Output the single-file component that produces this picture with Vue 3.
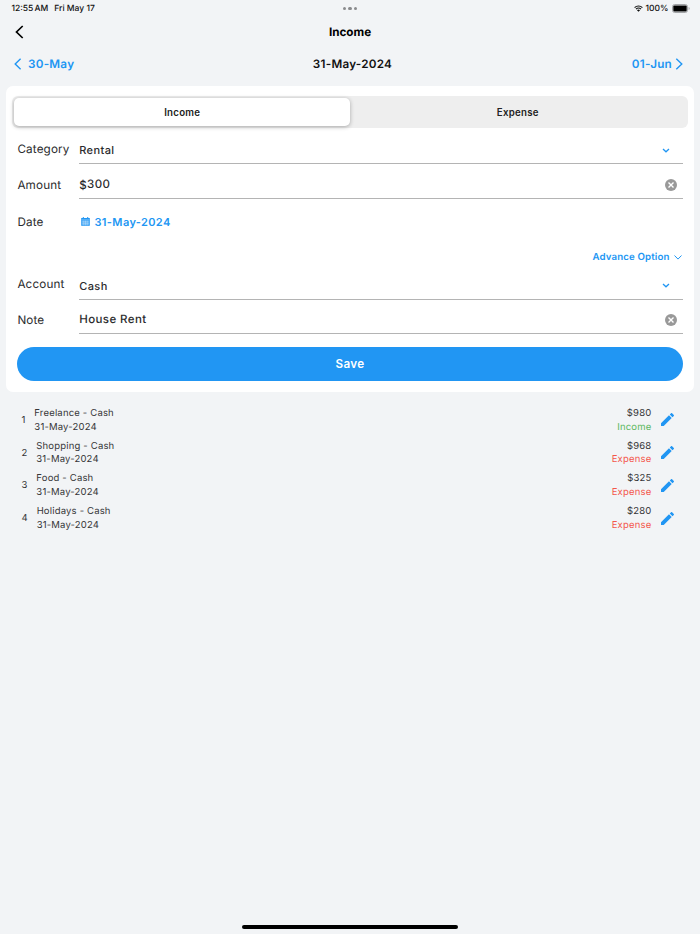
<template>
  <div class="screen">
    <!-- Status bar -->
    <div class="status-bar">
      <div class="status-left">
        <span class="clock">12:55 AM</span>
        <span class="today">Fri May 17</span>
      </div>
      <div class="dots"><i></i><i></i><i></i></div>
      <div class="status-right">
        <svg class="wifi" viewBox="0 0 18 14">
          <path d="M1.2 5.2a11 11 0 0 1 15.6 0M4 8.2a7 7 0 0 1 10 0" fill="none" stroke="#111" stroke-width="2.3" />
          <path d="M9 13.4 5.9 10.3a4.4 4.4 0 0 1 6.2 0z" fill="#111" />
        </svg>
        <span class="percent">100%</span>
        <svg class="battery" viewBox="0 0 18 9">
          <rect x=".5" y=".5" width="15" height="8" rx="2.2" fill="#f2f4f6" stroke="#a3a5a8" />
          <rect x="1.3" y="1.5" width="13.4" height="6" rx="1" fill="#000" />
          <path d="M16.6 3v3q1-.4 1-1.5t-1-1.5z" fill="#a3a5a8" />
        </svg>
      </div>
    </div>

    <!-- Title -->
    <header class="nav">
      <svg class="back" viewBox="0 0 9 14"><path d="M7.7 1 1.5 7l6.2 6" /></svg>
      <h1>Income</h1>
    </header>

    <!-- Day switcher -->
    <div class="days">
      <a class="prev">
        <svg viewBox="0 0 8 12"><path d="M6.6.8 1.2 6l5.4 5.2" /></svg>
        <span>30-May</span>
      </a>
      <strong>31-May-2024</strong>
      <a class="next">
        <span>01-Jun</span>
        <svg viewBox="0 0 8 12"><path d="m1.3.7 5.5 5.3-5.5 5.3" /></svg>
      </a>
    </div>

    <!-- Form -->
    <section class="card">
      <div class="tabs">
        <button
          v-for="tab in tabs"
          :key="tab"
          class="tab"
          :class="{ active: tab === type }"
          @click="type = tab"
        >{{ tab }}</button>
      </div>

      <div class="row select-row category">
        <label>Category</label>
        <div class="field">
          <span>Rental</span>
          <svg class="caret" viewBox="0 0 8 5"><path d="m1 1 3 2.8L7 1" /></svg>
        </div>
      </div>
      <div class="row input-row">
        <label>Amount</label>
        <div class="field">
          <span><b class="currency">$</b>300</span>
          <svg class="clear" viewBox="0 0 12 12"><circle cx="6" cy="6" r="6" /><path d="m3.5 3.5 5 5m0-5-5 5" /></svg>
        </div>
      </div>
      <div class="row date-row">
        <label>Date</label>
        <a class="date">
          <svg viewBox="0 0 9 9">
            <path d="M.9.9h.9V0h1v.9h3.4V0h1v.9h.9q.9 0 .9.9v.9H0v-.9Q0 .9.9.9z" />
            <path d="M0 3.1h9v5q0 .9-.9.9H.9Q0 9 0 8.1z" opacity=".78" />
            <path d="M.8 4.9h7.4M.8 6.8h7.4M2.8 3.6v4.7M4.5 3.6v4.7M6.2 3.6v4.7" class="grid" />
          </svg>
          <span>31-May-2024</span>
        </a>
      </div>
      <a class="advance">
        <span>Advance Option</span>
        <svg viewBox="0 0 8 5"><path d="m.5.5 3.5 3.6L7.5.5" /></svg>
      </a>
      <div class="row select-row account">
        <label>Account</label>
        <div class="field">
          <span>Cash</span>
          <svg class="caret" viewBox="0 0 8 5"><path d="m1 1 3 2.8L7 1" /></svg>
        </div>
      </div>
      <div class="row input-row note">
        <label>Note</label>
        <div class="field">
          <span>House Rent</span>
          <svg class="clear" viewBox="0 0 12 12"><circle cx="6" cy="6" r="6" /><path d="m3.5 3.5 5 5m0-5-5 5" /></svg>
        </div>
      </div>

      <button class="save">Save</button>
    </section>

    <!-- Entries of the day -->
    <ul class="entries">
      <li v-for="(entry, index) in entries" :key="index">
        <span class="index">{{ index + 1 }}</span>
        <div class="info">
          <div>{{ entry.category }} - Cash</div>
          <div>31-May-2024</div>
        </div>
        <div class="sum">
          <div>${{ entry.amount }}</div>
          <div :class="entry.type.toLowerCase()">{{ entry.type }}</div>
        </div>
        <svg class="pencil" viewBox="3 3 18 18">
          <path d="M3 17.25V21h3.75L17.81 9.94l-3.75-3.75L3 17.25zM20.71 7.04c.39-.39.39-1.02 0-1.41l-2.34-2.34a.9959.9959 0 0 0-1.41 0l-1.83 1.83 3.75 3.75 1.83-1.83z" />
        </svg>
      </li>
    </ul>

    <div class="home-indicator"></div>
  </div>
</template>

<script setup>
import { ref } from 'vue'

const tabs = ['Income', 'Expense']
const type = ref('Income')

const entries = [
  { category: 'Freelance', amount: 980, type: 'Income' },
  { category: 'Shopping', amount: 968, type: 'Expense' },
  { category: 'Food', amount: 325, type: 'Expense' },
  { category: 'Holidays', amount: 280, type: 'Expense' }
]
</script>

<style>
body {
  margin: 0;
  background: #f2f4f6;
}
</style>

<style scoped>
* {
  box-sizing: border-box;
}

.screen {
  display: flex;
  flex-direction: column;
  height: 934px;
  background: #f2f4f6;
  color: #2b2b2d;
  font-family: Inter, "Liberation Sans", sans-serif;
  text-rendering: geometricPrecision;
}

svg {
  flex: none;
  display: block;
}

button {
  border: 0;
  padding: 0;
  font-family: inherit;
}

/* Status bar */
.status-bar {
  display: grid;
  grid-template-columns: 1fr auto 1fr;
  align-items: center;
  height: 17px;
  padding: 0 10.5px 0 11.5px;
  font-size: 8.5px;
  font-weight: 500;
  color: #111;
}

.status-left {
  display: flex;
  gap: 6px;
}

.clock {
  word-spacing: -1.2px;
}

.dots {
  display: flex;
  gap: 2px;
  margin-right: 1px;
}

.dots i {
  width: 3.6px;
  height: 3.6px;
  border-radius: 50%;
  background: #8a8b8d;
}

.status-right {
  display: flex;
  align-items: center;
  justify-content: flex-end;
}

.wifi {
  width: 9px;
  height: 7px;
}

.percent {
  margin: 0 3px 0 3px;
}

.battery {
  width: 18px;
  height: 9px;
}

/* Title */
.nav {
  display: grid;
  grid-template-columns: 1fr auto 1fr;
  align-items: center;
  height: 30px;
  padding: 0 15px;
}

.back {
  width: 9px;
  height: 14px;
  fill: none;
  stroke: #000;
  stroke-width: 1.7;
}

h1 {
  margin: 0;
  padding-bottom: 1px;
  font-size: 11.7px;
  font-weight: 700;
  color: #000;
}

/* Day switcher */
.days {
  display: grid;
  grid-template-columns: 1fr auto 1fr;
  align-items: center;
  height: 33px;
  margin-bottom: 6px;
  padding: 0 17px 0 14px;
  font-size: 11.7px;
  font-weight: 600;
  letter-spacing: 0.25px;
}

.days strong {
  margin-left: 8px;
  font-weight: 600;
  color: #111;
}

.days a {
  display: flex;
  align-items: center;
  color: #2196f3;
}

.days svg {
  width: 8px;
  height: 12px;
  fill: none;
  stroke: #2196f3;
  stroke-width: 1.4;
}

.prev {
  gap: 6px;
}

.next {
  justify-content: flex-end;
  gap: 3px;
}

/* Form */
.card {
  display: flex;
  flex-direction: column;
  height: 306px;
  margin: 0 6px;
  padding: 9.5px 11.4px 0;
  border-radius: 7px;
  background: #fff;
}

.tabs {
  display: grid;
  grid-template-columns: 1fr 1fr;
  flex: none;
  height: 32.5px;
  margin: 0 -5px 8px;
  padding: 2px;
  border-radius: 6px;
  background: #eee;
}

.tab {
  padding-top: 1px;
  border-radius: 5px;
  background: none;
  font-size: 9.7px;
  font-weight: 600;
  letter-spacing: 0.25px;
  color: #222;
}

.tab.active {
  background: #fff;
  box-shadow: 0 1px 4px rgba(0, 0, 0, 0.3);
}

.row {
  display: grid;
  grid-template-columns: 61.8px 1fr;
  flex: none;
  font-size: 11.7px;
  letter-spacing: 0.4px;
}

label {
  align-self: center;
  white-space: nowrap;
  letter-spacing: 0.15px;
}

.field {
  display: flex;
  align-items: center;
  justify-content: space-between;
  border-bottom: 1px solid #b4b4b4;
  font-size: 11px;
  font-weight: 500;
}

.select-row {
  height: 28px;
}

.select-row label {
  padding-bottom: 3px;
}

.select-row .field {
  padding: 1px 12.5px 0 0;
}

.account {
  height: 29px;
}

.account label {
  padding: 0 0 2px;
}

.account .field {
  padding-top: 2px;
}

.input-row {
  height: 35px;
}

.input-row .field {
  padding-right: 5.5px;
  font-size: 11.5px;
}

.input-row label {
  padding-top: 7px;
}

.input-row .field span {
  padding-top: 5px;
}

.input-row .clear {
  margin-top: 8px;
}

.note {
  height: 34.5px;
}

.currency {
  display: inline-block;
  transform: translateY(1px);
  font-weight: 500;
}

.caret {
  width: 8px;
  height: 5px;
  fill: none;
  stroke: #2196f3;
  stroke-width: 1.3;
}

.clear {
  width: 12px;
  height: 12px;
  fill: #999;
}

.clear path {
  stroke: #fff;
  stroke-width: 1.4;
}

.date-row {
  height: 45px;
}

.date {
  display: flex;
  align-items: center;
  gap: 4px;
  padding-left: 2.3px;
  font-size: 11px;
  font-weight: 600;
  letter-spacing: 0.37px;
  color: #2196f3;
}

.date svg {
  width: 9px;
  height: 9px;
  fill: #2196f3;
}

.date .grid {
  fill: none;
  stroke: #fff;
  stroke-width: 0.3;
}

.advance {
  display: flex;
  align-items: center;
  justify-content: flex-end;
  gap: 4px;
  height: 26.5px;
  padding-right: 1px;
  font-size: 9.7px;
  font-weight: 600;
  letter-spacing: 0.14px;
  color: #2196f3;
}

.advance svg {
  width: 8px;
  height: 5px;
  fill: none;
  stroke: #2196f3;
  stroke-width: 1;
}

.save {
  flex: none;
  height: 34px;
  margin-top: 13px;
  border-radius: 17px;
  background: #2196f3;
  font-size: 11.7px;
  font-weight: 600;
  letter-spacing: 0.3px;
  color: #fff;
}

/* Entries */
.entries {
  margin: 11.3px 26px 0 21.5px;
  padding: 0;
  list-style: none;
  font-size: 9.5px;
  letter-spacing: 0.18px;
  line-height: 13.8px;
  color: #363638;
}

.entries li {
  display: flex;
  align-items: center;
  height: 32.8px;
}

.index {
  padding-top: 2px;
  margin-right: 8.8px;
}

.info {
  flex: 1;
  padding-top: 2px;
}

.sum {
  padding-top: 2px;
  margin-right: 9.6px;
  text-align: right;
}

.income {
  color: #5cb860;
}

.expense {
  color: #f4564b;
}

.pencil {
  width: 13px;
  height: 13px;
  fill: #2196f3;
}

.home-indicator {
  width: 216px;
  height: 4px;
  margin: auto auto 5px;
  border-radius: 2px;
  background: #000;
}
</style>
